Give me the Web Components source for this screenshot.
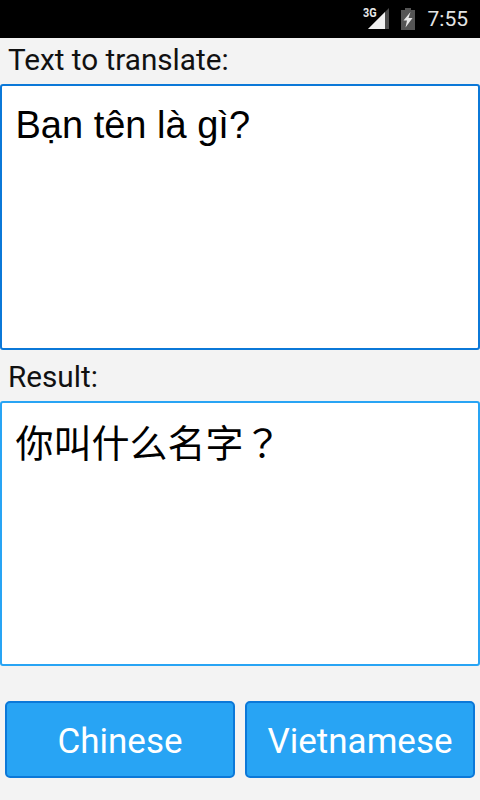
<!DOCTYPE html>
<html>
<head>
<meta charset="utf-8">
<title>Translate</title>
<style>
html, body { margin: 0; height: 100%; }
body { background: #f3f3f3; font-family: Roboto, sans-serif; }
.tc { font-family: "Noto Sans CJK TC", sans-serif; }
</style>
</head>
<body>
<translator-app>
  <status-bar slot="status" time="7:55"></status-bar>
  <text-panel label="Text to translate:" tone="dark" style="--box-h:266px;--label-h:46px;--label-up:4px;--text-top:15px">Bạn tên là gì?</text-panel>
  <text-panel label="Result:" tone="light" style="--box-h:265px;--label-h:51px;--label-up:0px;--label-down:2px;--text-top:14px">你叫什么名字<span class="tc">？</span></text-panel>
  <lang-button slot="buttons">Chinese</lang-button>
  <lang-button slot="buttons">Vietnamese</lang-button>
</translator-app>

<script>
const appTemplate = document.createElement('template');
appTemplate.innerHTML = `
<style>
:host { display: flex; flex-direction: column; width: 480px; height: 800px; overflow: hidden; }
.buttons { display: flex; gap: 10px; padding: 35px 5px 0; }
</style>
<slot name="status"></slot>
<slot></slot>
<div class="buttons"><slot name="buttons"></slot></div>
`;

class TranslatorApp extends HTMLElement {
  constructor() {
    super();
    this.attachShadow({ mode: 'open' });
    this.shadowRoot.appendChild(appTemplate.content.cloneNode(true));
  }
}

const statusTemplate = document.createElement('template');
statusTemplate.innerHTML = `
<style>
:host { display: flex; justify-content: flex-end; align-items: center; height: 38px; background: #000; color: #e4e4e4; font-family: Roboto, sans-serif; }
.net { position: relative; width: 26px; height: 22px; margin: 0 12px 0 0; }
.net svg { display: block; position: absolute; right: 0; bottom: 1px; }
.net span { position: absolute; left: 0; top: -1px; font-size: 12px; font-weight: 700; line-height: 12px; color: #e8e8e8; transform: scaleX(.9); transform-origin: left; }
.batt { display: block; margin: 0 13px 0 0; }
.time { font-size: 21px; margin-right: 12px; }
</style>
<div class="net">
  <span>3G</span>
  <svg width="21" height="21" viewBox="0 0 21 21">
    <path d="M21 0V21H0Z" fill="#4a4a4a"/>
    <path d="M17 4V21H0Z" fill="#f0f0f0"/>
  </svg>
</div>
<svg class="batt" width="14" height="22" viewBox="0 0 14 22">
  <path d="M4 0H10V2H14V22H0V2H4Z" fill="#555"/>
  <path d="M9.5 4L2.5 12.5H6L4.5 19.5L11.5 10H7.5Z" fill="#e8e8e8"/>
</svg>
<span class="time"></span>
`;

class StatusBar extends HTMLElement {
  constructor() {
    super();
    this.attachShadow({ mode: 'open' });
    this.shadowRoot.appendChild(statusTemplate.content.cloneNode(true));
  }

  connectedCallback() {
    this.shadowRoot.querySelector('.time').textContent = this.getAttribute('time');
  }
}

const panelTemplate = document.createElement('template');
panelTemplate.innerHTML = `
<style>
:host { display: block; }
.label { height: var(--label-h); box-sizing: border-box; padding: var(--label-down, 0) 0 var(--label-up, 0) 8px; display: flex; align-items: center; font-size: 29.7px; color: #111; }
.box { height: var(--box-h); box-sizing: border-box; background: #fff; border: 2px solid #28a4f4; border-radius: 3px; padding: var(--text-top) 14px 0 13.5px; font-family: "Liberation Sans", "Noto Sans CJK SC", sans-serif; font-size: 38px; line-height: 48px; color: #000; }
:host([tone="dark"]) .box { border-color: #0b78d8; }
</style>
<div class="label"></div>
<div class="box"><slot></slot></div>
`;

class TextPanel extends HTMLElement {
  constructor() {
    super();
    this.attachShadow({ mode: 'open' });
    this.shadowRoot.appendChild(panelTemplate.content.cloneNode(true));
  }

  connectedCallback() {
    this.shadowRoot.querySelector('.label').textContent = this.getAttribute('label');
  }
}

const buttonTemplate = document.createElement('template');
buttonTemplate.innerHTML = `
<style>
:host { flex: 1; display: flex; align-items: center; justify-content: center; height: 77px; box-sizing: border-box; padding-top: 3px; background: #28a4f4; border: 2px solid #0b78d8; border-radius: 5px; color: #fff; font-family: Roboto, sans-serif; font-size: 35px; cursor: pointer; }
</style>
<slot></slot>
`;

class LangButton extends HTMLElement {
  constructor() {
    super();
    this.attachShadow({ mode: 'open' });
    this.shadowRoot.appendChild(buttonTemplate.content.cloneNode(true));
  }
}

window.customElements.define('status-bar', StatusBar);
window.customElements.define('text-panel', TextPanel);
window.customElements.define('lang-button', LangButton);
window.customElements.define('translator-app', TranslatorApp);
</script>
</body>
</html>
